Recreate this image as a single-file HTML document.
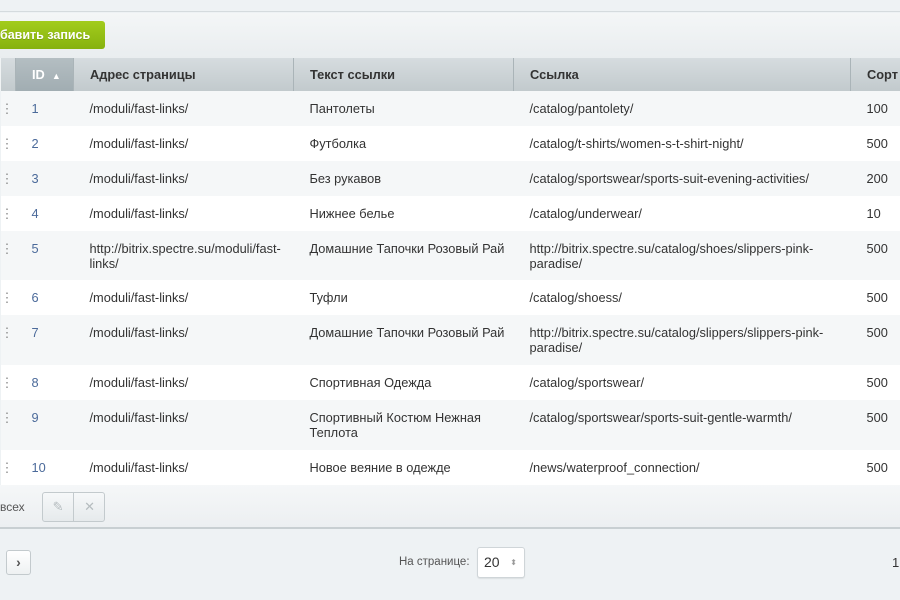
<!DOCTYPE html>
<html><head><meta charset="utf-8"><style>
*{margin:0;padding:0;box-sizing:border-box}
body{width:900px;height:600px;overflow:hidden;background:#eef2f4;font-family:"Liberation Sans",Arial,sans-serif;font-size:12.8px;color:#333;position:relative}
.top{position:absolute;left:0;top:0;width:900px;height:12px;background:#eef2f4;border-bottom:1px solid #d5dbde}
.toolbar{position:absolute;left:0;top:13px;width:900px;height:45px;background:linear-gradient(#f4f6f7,#e9edef)}
.btn{position:absolute;left:-10px;top:8px;width:115px;height:28px;border-radius:3px;background:linear-gradient(#a3cc1c,#86b20f);color:#fff;font-weight:bold;font-size:12.5px;line-height:28px;padding-left:10px;text-shadow:0 1px 0 rgba(0,0,0,.15)}
table{position:absolute;left:0;top:58px;border-collapse:collapse;width:950px;table-layout:fixed}
th{height:33px;background:linear-gradient(#d6dcdf,#c2cacd);text-align:left;font-weight:bold;color:#333;padding-left:16px;border-left:1px solid #f0f3f4;border-right:1px solid #aab4b8;font-size:12.8px}
th.id{background:linear-gradient(#b4bec2,#a1adb2);color:#fff;padding-left:16px}
td{vertical-align:top;padding:10px 16px 0 16px;line-height:15px;color:#333}
td.d{padding:10px 0 0 0;color:#888}
td.n{color:#4b6a9a}
tr.o td{background:#f5f7f8}
tr.e td{background:#fff}
.bottom{position:absolute;left:0;top:485px;width:900px;height:44px;background:linear-gradient(#f5f7f8,#eceff1);border-bottom:2px solid #c8cfd2}
.grp{position:absolute;left:42px;top:7px;width:63px;height:30px;border:1px solid #c3cacd;border-radius:3px;background:linear-gradient(#f6f8f9,#e6eaec)}
.grp div{position:absolute;top:0;width:31px;height:28px;text-align:center;line-height:28px;color:#b5bcbf}
.pag{position:absolute;left:6px;top:550px;width:25px;height:25px;border:1px solid #c3cacd;border-radius:3px;background:linear-gradient(#fff,#eef1f2);text-align:center;line-height:22px;font-size:14px;font-weight:bold;color:#555}
.sel{position:absolute;left:477px;top:547px;width:48px;height:31px;border:1px solid #cfd5d8;border-radius:3px;background:#fff;font-size:14px;line-height:29px;padding-left:6px;color:#333;box-shadow:0 1px 1px rgba(0,0,0,.08)}
</style></head><body>
<div class="top"></div>
<div class="toolbar"><div class="btn">бавить запись</div></div>
<table>
<colgroup><col style="width:15px"><col style="width:58px"><col style="width:220px"><col style="width:220px"><col style="width:337px"><col style="width:100px"></colgroup>
<tr><th style="padding:0"></th><th class="id">ID &nbsp;<span style="font-size:9px">▲</span></th><th>Адрес страницы</th><th>Текст ссылки</th><th>Ссылка</th><th>Сорт</th></tr>
<tr class="o" style="height:35px"><td class="d">⋮</td><td class="n">1</td><td>/moduli/fast-links/</td><td>Пантолеты</td><td>/catalog/pantolety/</td><td>100</td></tr>
<tr class="e" style="height:35px"><td class="d">⋮</td><td class="n">2</td><td>/moduli/fast-links/</td><td>Футболка</td><td>/catalog/t-shirts/women-s-t-shirt-night/</td><td>500</td></tr>
<tr class="o" style="height:35px"><td class="d">⋮</td><td class="n">3</td><td>/moduli/fast-links/</td><td>Без рукавов</td><td>/catalog/sportswear/sports-suit-evening-activities/</td><td>200</td></tr>
<tr class="e" style="height:35px"><td class="d">⋮</td><td class="n">4</td><td>/moduli/fast-links/</td><td>Нижнее белье</td><td>/catalog/underwear/</td><td>10</td></tr>
<tr class="o" style="height:49px"><td class="d">⋮</td><td class="n">5</td><td>http://bitrix.spectre.su/moduli/fast-links/</td><td style="white-space:nowrap">Домашние Тапочки Розовый Рай</td><td>http://bitrix.spectre.su/catalog/shoes/slippers-pink-paradise/</td><td>500</td></tr>
<tr class="e" style="height:35px"><td class="d">⋮</td><td class="n">6</td><td>/moduli/fast-links/</td><td>Туфли</td><td>/catalog/shoess/</td><td>500</td></tr>
<tr class="o" style="height:50px"><td class="d">⋮</td><td class="n">7</td><td>/moduli/fast-links/</td><td style="white-space:nowrap">Домашние Тапочки Розовый Рай</td><td>http://bitrix.spectre.su/catalog/slippers/slippers-pink-paradise/</td><td>500</td></tr>
<tr class="e" style="height:35px"><td class="d">⋮</td><td class="n">8</td><td>/moduli/fast-links/</td><td>Спортивная Одежда</td><td>/catalog/sportswear/</td><td>500</td></tr>
<tr class="o" style="height:50px"><td class="d">⋮</td><td class="n">9</td><td>/moduli/fast-links/</td><td>Спортивный Костюм Нежная Теплота</td><td>/catalog/sportswear/sports-suit-gentle-warmth/</td><td>500</td></tr>
<tr class="e" style="height:35px"><td class="d">⋮</td><td class="n">10</td><td>/moduli/fast-links/</td><td>Новое веяние в одежде</td><td>/news/waterproof_connection/</td><td>500</td></tr>
</table>
<div class="bottom"><div style="position:absolute;left:0;top:15px;font-size:12px;color:#555">всех</div>
<div class="grp"><div style="left:0;border-right:1px solid #c3cacd">✎</div><div style="left:31px">✕</div></div></div>
<div class="pag">›</div>
<div style="position:absolute;left:399px;top:556px;font-size:11.5px;color:#555">На странице:</div>
<div class="sel">20<span style="position:absolute;right:7px;top:0;font-size:8px;color:#999;line-height:29px">⬍</span></div>
<div style="position:absolute;left:892px;top:555px;font-size:13px;color:#333">1</div>
</body></html>
